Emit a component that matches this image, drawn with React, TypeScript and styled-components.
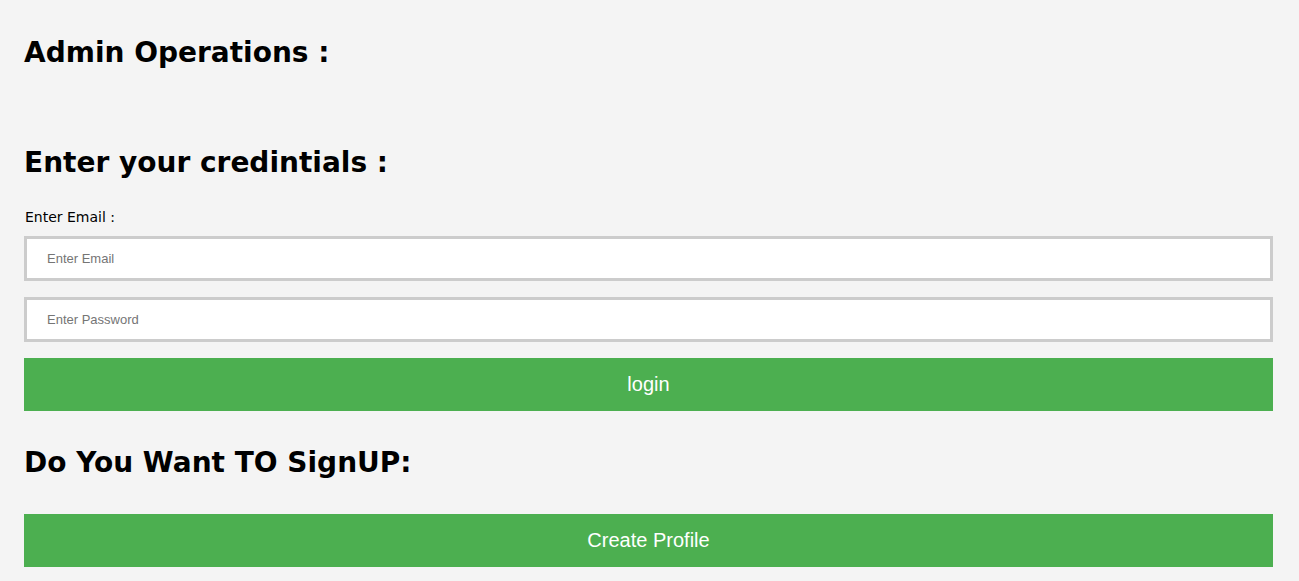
import React from "react";
import styled, { createGlobalStyle } from "styled-components";

const Global = createGlobalStyle`
  html, body { margin: 0; padding: 0; background: #f4f4f4; }
  body { font-family: "Comic Sans MS", "DejaVu Sans", sans-serif; color: #000; }
`;

const Page = styled.div`
  display: flex;
  flex-direction: column;
  padding: 33px 26px 0 24px;
`;

const Heading = styled.h2<{ $gap: number; $top?: number }>`
  margin: ${(p) => p.$top ?? 0}px 0 ${(p) => p.$gap}px 0;
  font-family: "Comic Sans MS", "DejaVu Sans", sans-serif;
  font-size: 28px;
  font-weight: bold;
  line-height: 40px;
  height: 40px;
`;

const Form = styled.form`
  display: flex;
  flex-direction: column;
  gap: 16px;
`;

const Label = styled.label`
  display: block;
  font-size: 14px;
  line-height: 18px;
  margin: 0 0 -6px 1px;
`;

const Input = styled.input`
  box-sizing: border-box;
  width: 100%;
  height: 45px;
  border: 3px solid #ccc;
  background: #fff;
  padding: 0 20px;
  font-family: Arial, "Liberation Sans", sans-serif;
  font-size: 13px;
  outline: none;
  &::placeholder { color: #757575; }
`;

const Button = styled.button`
  width: 100%;
  height: 53px;
  border: none;
  background: #4caf50;
  color: #fff;
  font-family: Arial, "Liberation Sans", sans-serif;
  font-size: 20px;
  cursor: pointer;
`;

export default function App() {
  return (
    <>
      <Global />
      <Page>
        <Heading $gap={70}>Admin Operations :</Heading>
        <Heading $gap={25}>Enter your credintials :</Heading>
        <Form onSubmit={(e) => e.preventDefault()}>
          <Label htmlFor="email">Enter Email :</Label>
          <Input id="email" type="email" placeholder="Enter Email" />
          <Input type="password" placeholder="Enter Password" />
          <Button type="submit">login</Button>
        </Form>
        <Heading $top={32} $gap={31}>Do You Want TO SignUP:</Heading>
        <Button type="button">Create Profile</Button>
      </Page>
    </>
  );
}
